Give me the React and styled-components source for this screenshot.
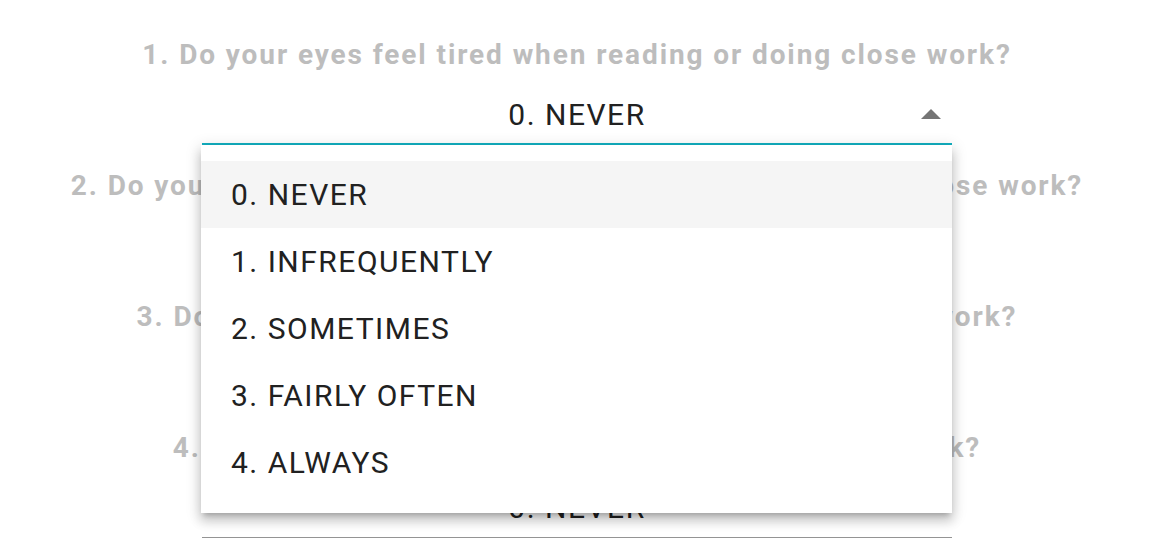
import React from 'react';
import styled, { createGlobalStyle } from 'styled-components';

const GlobalStyle = createGlobalStyle`
  body {
    margin: 0;
    background: #ffffff;
    font-family: Roboto, "Liberation Sans", Arial, sans-serif;
    overflow: hidden;
  }
`;

const questions = [
  'Do your eyes feel tired when reading or doing close work?',
  'Do your eyes feel uncomfortable when reading or doing close work?',
  'Do you have headaches when reading or doing close work?',
  'Do you feel sleepy when reading or doing close work?',
  'Do you lose concentration when reading or doing close work?',
];

const answers = ['0. NEVER', '1. INFREQUENTLY', '2. SOMETIMES', '3. FAIRLY OFTEN', '4. ALWAYS'];

const Survey = styled.main`
  display: flex;
  flex-direction: column;
  align-items: center;
  padding: 40px 6px 0 0;
`;

const Block = styled.section`
  display: flex;
  flex-direction: column;
  align-items: center;
  padding-bottom: 26px;
`;

const Question = styled.h2`
  margin: 0 0 15px;
  font-size: 28px;
  line-height: 30px;
  font-weight: 700;
  letter-spacing: 1.9px;
  color: #bdbdbd;
  text-align: center;
  white-space: nowrap;
`;

const SelectWrap = styled.div`
  position: relative;
  width: 750px;
  z-index: ${(p) => (p.open ? 10 : 1)};
`;

const Field = styled.div`
  position: relative;
  height: 60px;
  display: flex;
  align-items: center;
  justify-content: center;
  font-size: 30px;
  letter-spacing: 1.5px;
  color: #212121;
  border-bottom: 1px solid #949494;
  box-sizing: border-box;

  &::after {
    content: '';
    position: absolute;
    left: 0;
    right: 0;
    bottom: -1px;
    height: 2px;
    background: #12afc0;
    display: ${(p) => (p.open ? 'block' : 'none')};
  }
`;

const Arrow = styled.span`
  position: absolute;
  right: 11px;
  top: 24px;
  width: 0;
  height: 0;
  border-left: 10px solid transparent;
  border-right: 10px solid transparent;
  ${(p) =>
    p.up
      ? 'border-bottom: 10px solid #757575;'
      : 'border-top: 10px solid #757575;'}
`;

const Menu = styled.ul`
  position: absolute;
  top: 60px;
  left: -1px;
  width: 751px;
  margin: 0;
  padding: 16px 0 17px;
  list-style: none;
  background: #ffffff;
  box-shadow: 0 5px 5px -3px rgba(0, 0, 0, 0.2), 0 8px 10px 1px rgba(0, 0, 0, 0.14),
    0 3px 14px 2px rgba(0, 0, 0, 0.12);
`;

const Item = styled.li`
  height: 67px;
  display: flex;
  align-items: center;
  padding-left: 30px;
  font-size: 30px;
  letter-spacing: 1.5px;
  color: #212121;
  background: ${(p) => (p.selected ? '#f5f5f5' : 'transparent')};
`;

const Select = ({ value, open }) => (
  <SelectWrap open={open}>
    <Field open={open}>
      {value}
      <Arrow up={open} />
    </Field>
    {open && (
      <Menu>
        {answers.map((a) => (
          <Item key={a} selected={a === value}>
            {a}
          </Item>
        ))}
      </Menu>
    )}
  </SelectWrap>
);

export default function App() {
  return (
    <>
      <GlobalStyle />
      <Survey>
        {questions.map((q, i) => (
          <Block key={q}>
            <Question>
              {i + 1}. {q}
            </Question>
            <Select value={answers[0]} open={i === 0} />
          </Block>
        ))}
      </Survey>
    </>
  );
}
